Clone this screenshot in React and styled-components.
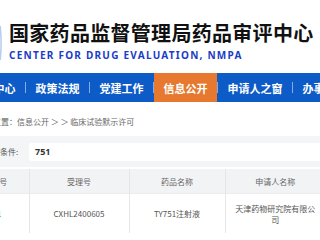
import React from "react";
import styled, { createGlobalStyle } from "styled-components";

const Global = createGlobalStyle`
  html, body { margin: 0; padding: 0; background: #fff; }
  body { font-family: "Noto Sans CJK SC", "Noto Sans", sans-serif; }
`;

const Page = styled.div`
  width: 320px;
  height: 240px;
  overflow: hidden;
  background: #fff;
`;

const Inner = styled.div`
  margin-left: -30px;
  width: 420px;
`;

const Header = styled.header`
  display: flex;
  align-items: flex-start;
  height: 73px;
  padding-top: 21px;
  box-sizing: border-box;
`;

const Logo = styled.svg`
  flex: none;
  width: 32px;
  height: 40px;
  margin-top: 2px;
  margin-right: 7px;
`;

const TitleBlock = styled.div`
  display: flex;
  flex-direction: column;
`;

const TitleCn = styled.div`
  font-family: "Noto Sans CJK SC", sans-serif;
  font-weight: 700;
  font-size: 20px;
  line-height: 24px;
  letter-spacing: 0.3px;
  color: #111;
  white-space: nowrap;
`;

const TitleEn = styled.div`
  margin-top: 4px;
  font-family: "Noto Sans", "Liberation Sans", sans-serif;
  font-weight: 700;
  font-size: 10px;
  line-height: 12px;
  letter-spacing: 1.25px;
  color: #1a3cc8;
  white-space: nowrap;
`;

const Nav = styled.nav`
  display: flex;
  align-items: stretch;
  height: 29px;
  background: #0d5bc6;
`;

const NavList = styled.ul`
  display: flex;
  align-items: stretch;
  margin: 0 0 0 -8px;
  padding: 0;
  list-style: none;
`;

const NavItem = styled.li`
  display: flex;
  align-items: center;
  padding: 0 9.5px;
  font-size: 11px;
  font-weight: 700;
  color: #fff;
  white-space: nowrap;
  background: ${(p) => (p.$active ? "#e6792f" : "transparent")};
`;

const NavSep = styled.li`
  align-self: center;
  width: 1px;
  height: 11px;
  background: rgba(255, 255, 255, 0.5);
`;

const Crumb = styled.div`
  padding: 14px 0 0 7px;
  font-size: 8px;
  line-height: 12px;
  color: #666;
  white-space: nowrap;
`;

const SearchBand = styled.div`
  display: flex;
  align-items: center;
  margin-top: 8px;
  height: 31px;
  padding-left: 14px;
  background: #f4f5f7;
`;

const Label = styled.span`
  font-size: 8px;
  color: #555;
  white-space: nowrap;
  width: 45px;
`;

const Input = styled.div`
  flex: 1;
  height: 18px;
  display: flex;
  align-items: center;
  padding-left: 6px;
  background: #fff;
  border-radius: 2px;
  font-family: "Noto Sans", "Noto Sans CJK SC", sans-serif;
  font-size: 9px;
  font-weight: 700;
  color: #333;
`;

const Table = styled.table`
  margin-top: 2px;
  border-collapse: collapse;
  table-layout: fixed;
  width: 355px;
`;

const Th = styled.th`
  height: 24px;
  padding: 0;
  background: #f2f3f5;
  font-size: 8px;
  font-weight: 400;
  color: #666;
  text-align: center;
  border-left: 1px solid #e6e6e6;
  &:first-child { border-left: none; }
`;

const Td = styled.td`
  height: 39px;
  padding: 0 8px;
  font-size: 8px;
  line-height: 11px;
  color: #555;
  text-align: center;
  border-left: 1px solid #e6e6e6;
  border-top: 1px solid #ececec;
  &:first-child { border-left: none; }
`;

const navItems = ["走进中心", "政策法规", "党建工作", "信息公开", "申请人之窗", "办事服务"];

export default function App() {
  return (
    <>
      <Global />
      <Page>
        <Inner>
          <Header>
            <Logo viewBox="0 0 32 40">
              <path d="M30.2 3 Q32 20 30.2 37" stroke="#b9cdf0" strokeWidth="1.6" fill="none" />
            </Logo>
            <TitleBlock>
              <TitleCn>国家药品监督管理局药品审评中心</TitleCn>
              <TitleEn>CENTER FOR DRUG EVALUATION, NMPA</TitleEn>
            </TitleBlock>
          </Header>
          <Nav>
            <NavList>
              {navItems.map((t, i) => (
                <React.Fragment key={t}>
                  {i > 0 && <NavSep />}
                  <NavItem $active={t === "信息公开"}>{t}</NavItem>
                </React.Fragment>
              ))}
            </NavList>
          </Nav>
          <Crumb>当前位置：信息公开 ＞ ＞ 临床试验默示许可</Crumb>
          <SearchBand>
            <Label>查询条件:</Label>
            <Input>751</Input>
          </SearchBand>
          <Table>
            <colgroup>
              <col style={{ width: 59 }} />
              <col style={{ width: 100 }} />
              <col style={{ width: 96 }} />
              <col style={{ width: 100 }} />
            </colgroup>
            <thead>
              <tr>
                <Th>序号</Th>
                <Th>受理号</Th>
                <Th>药品名称</Th>
                <Th>申请人名称</Th>
              </tr>
            </thead>
            <tbody>
              <tr>
                <Td>1</Td>
                <Td>CXHL2400605</Td>
                <Td>TY751注射液</Td>
                <Td>天津药物研究院有限公司</Td>
              </tr>
            </tbody>
          </Table>
        </Inner>
      </Page>
    </>
  );
}
